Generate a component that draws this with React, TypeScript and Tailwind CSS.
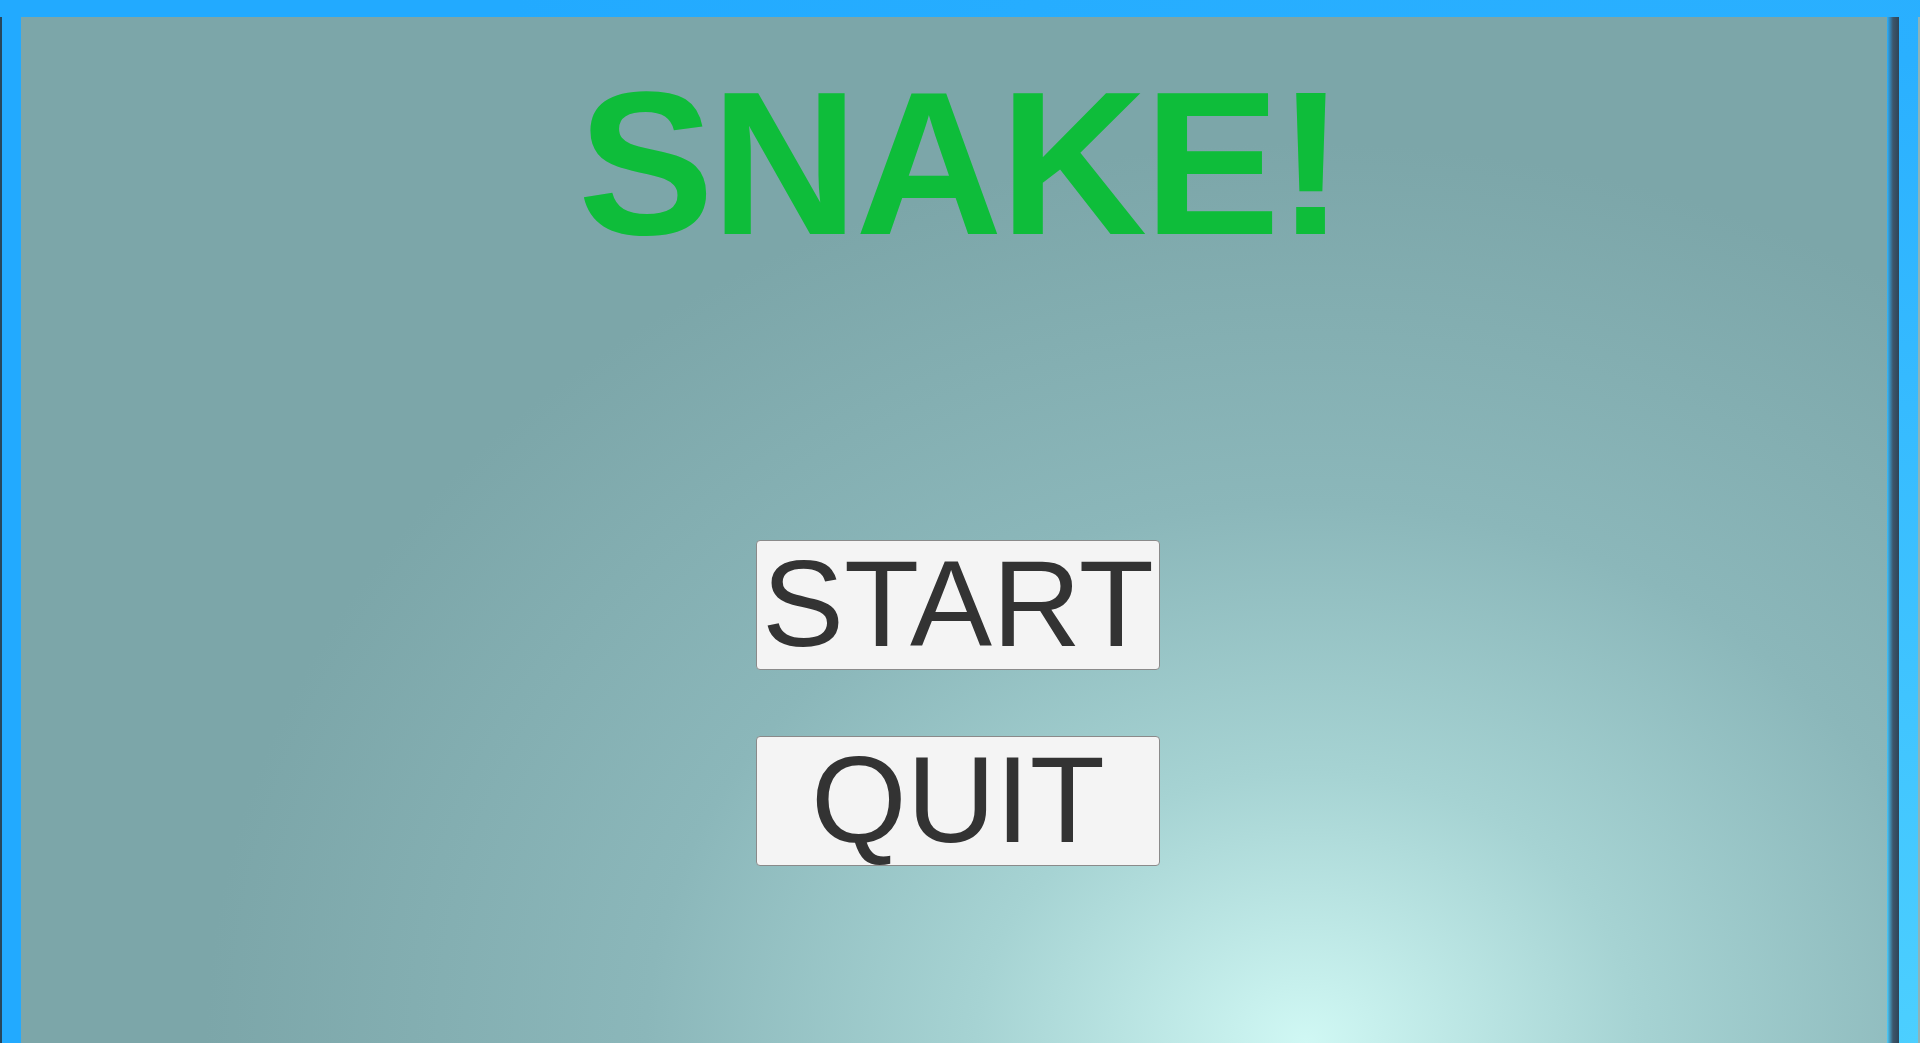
import React from "react";

const FONT = { fontFamily: '"Liberation Sans", Arial, sans-serif' };

function MenuButton({ label, className = "" }: { label: string; className?: string }) {
  return (
    <button
      className={`w-[404px] h-[130px] flex items-center justify-center pb-[4px] bg-[#f4f4f4] border border-[#8a8a8a] rounded-[4px] text-[#333333] text-[123px] leading-none ${className}`}
      style={FONT}
    >
      {label}
    </button>
  );
}

export default function App() {
  return (
    <div className="h-screen w-full flex flex-col overflow-hidden bg-[radial-gradient(circle_at_100%_100%,#4ccfff_0%,#2ab0ff_45%,#22aaff_80%)]">
      {/* top frame */}
      <div className="h-[17px] shrink-0" />

      <div className="flex-1 flex min-h-0">
        <div className="w-[2px] bg-[#27475c]" />
        <div className="w-[19px]" />

        {/* game canvas */}
        <div className="flex-1 flex flex-col items-center bg-[radial-gradient(ellipse_1100px_900px_at_1285px_1026px,#d0f8f4_0%,#a6d3d3_30%,#8bb7ba_60%,#7ca6a9_100%)]">
          <h1
            className="mt-[44px] ml-[12px] text-[204px] leading-none font-bold tracking-[-3px] text-[#0ebd3a]"
            style={FONT}
          >
            SNAKE!
          </h1>

          <div className="mt-[275px] ml-[8px] flex flex-col gap-[66px]">
            <MenuButton label="START" />
            <MenuButton label="QUIT" />
          </div>
        </div>

        <div className="w-[12px] bg-gradient-to-r from-[#7fa9ad]/0 via-[#3d566a] to-[#2e4558]" />
        <div className="w-[19px]" />
        <div className="w-[2px] bg-[#8fb3b8]" />
      </div>
    </div>
  );
}
